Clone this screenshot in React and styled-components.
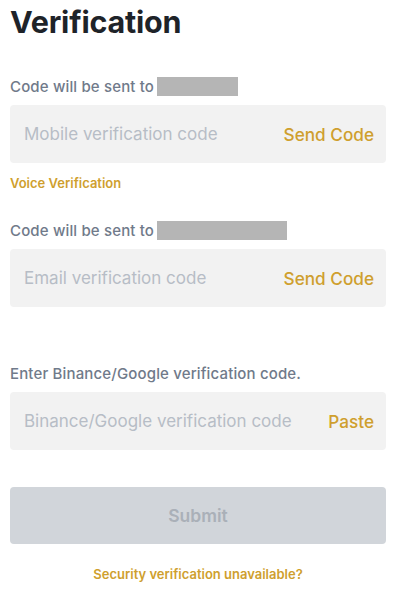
import React from "react";
import styled, { createGlobalStyle } from "styled-components";

const Global = createGlobalStyle`
  html, body { margin: 0; padding: 0; background: #ffffff; }
  body { font-family: "Inter", "Noto Sans", sans-serif; -webkit-font-smoothing: antialiased; }
  * { box-sizing: border-box; }
`;

const Page = styled.div`
  width: 406px;
  height: 600px;
  padding: 0 20px 0 10px;
  display: flex;
  flex-direction: column;
`;

const Title = styled.h1`
  margin: 0;
  padding-top: 2px;
  height: 44px;
  font-size: 30.5px;
  font-weight: 700;
  color: #1e2329;
  letter-spacing: -0.2px;
  line-height: 40px;
`;

const Section = styled.div`
  display: flex;
  flex-direction: column;
  margin-top: ${(p) => p.$mt}px;
`;

const Label = styled.div`
  display: flex;
  align-items: center;
  height: 20px;
  font-size: 15px;
  font-weight: 500;
  letter-spacing: 0.15px;
  color: #707a8a;
`;

const Masked = styled.span`
  display: inline-block;
  width: ${(p) => p.$w}px;
  height: 19px;
  margin-left: 3px;
  background: #b5b5b5;
`;

const Field = styled.div`
  display: flex;
  align-items: center;
  justify-content: space-between;
  height: 58px;
  margin-top: ${(p) => p.$mt}px;
  padding: 0 12px 0 14px;
  background: #f2f2f2;
  border-radius: 4px;
`;

const Placeholder = styled.span`
  font-size: 17px;
  color: #b7bdc6;
`;

const Action = styled.span`
  font-size: 17.2px;
  font-weight: 500;
  color: #cf9f2e;
`;

const Link = styled.div`
  margin-top: ${(p) => p.$mt}px;
  font-size: 13px;
  font-weight: 600;
  color: #cf9f2e;
  text-align: ${(p) => p.$align || "left"};
`;

const Submit = styled.button`
  height: 57px;
  margin-top: 37px;
  border: none;
  border-radius: 4px;
  background: #d1d5da;
  color: #aab0b8;
  font-family: inherit;
  font-size: 17.5px;
  font-weight: 600;
`;

export default function App() {
  return (
    <>
      <Global />
      <Page>
        <Title>Verification</Title>
        <Section $mt={32}>
          <Label>
            Code will be sent to <Masked $w={81} />
          </Label>
          <Field $mt={9}>
            <Placeholder>Mobile verification code</Placeholder>
            <Action>Send Code</Action>
          </Field>
          <Link $mt={12}>Voice Verification</Link>
        </Section>
        <Section $mt={29}>
          <Label>
            Code will be sent to <Masked $w={130} />
          </Label>
          <Field $mt={9}>
            <Placeholder>Email verification code</Placeholder>
            <Action>Send Code</Action>
          </Field>
        </Section>
        <Section $mt={56}>
          <Label>Enter Binance/Google verification code.</Label>
          <Field $mt={9}>
            <Placeholder>Binance/Google verification code</Placeholder>
            <Action>Paste</Action>
          </Field>
        </Section>
        <Submit>Submit</Submit>
        <Link $mt={22} $align="center">Security verification unavailable?</Link>
      </Page>
    </>
  );
}
